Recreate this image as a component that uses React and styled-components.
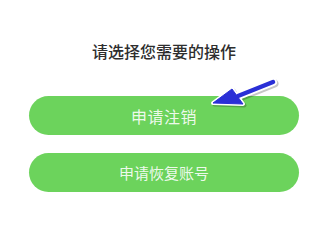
import React from "react";
import styled, { createGlobalStyle } from "styled-components";

const GlobalStyle = createGlobalStyle`
  html, body {
    margin: 0;
    padding: 0;
    background: #ffffff;
  }
  body {
    font-family: "Noto Sans CJK SC", "Noto Sans", sans-serif;
  }
`;

const Page = styled.div`
  width: 319px;
  height: 207px;
  box-sizing: border-box;
  padding: 40px 20px 0 29px;
  display: flex;
  flex-direction: column;
  align-items: stretch;
  overflow: hidden;
`;

const Title = styled.div`
  text-align: center;
  font-size: 16px;
  line-height: 22px;
  font-weight: 500;
  color: #2e2e2e;
  margin-bottom: 34px;
`;

const ActionList = styled.div`
  display: flex;
  flex-direction: column;
  gap: 18px;
`;

const ActionButton = styled.button`
  position: relative;
  height: 39px;
  border: none;
  border-radius: 999px;
  background: #6cd35c;
  color: rgba(255, 255, 255, 0.9);
  font-family: inherit;
  font-size: ${(p) => (p.$small ? "15px" : "16px")};
  letter-spacing: ${(p) => (p.$small ? "0" : "0.5px")};
  cursor: pointer;
  padding: 0;
`;

const Pointer = styled.svg`
  position: absolute;
  left: 176px;
  top: -21px;
  width: 80px;
  height: 40px;
  overflow: visible;
  pointer-events: none;
`;

const SHAFT = { x1: 33, y1: 21, x2: 68, y2: 7 };
const HEAD = "8,28 27,14 38,29";

const ArrowMark = () => (
  <Pointer viewBox="0 0 80 40">
    <g opacity="0.22" transform="translate(1.5 1.5)">
      <line {...SHAFT} stroke="#000" strokeWidth="8" strokeLinecap="round" />
      <polygon points={HEAD} fill="#000" stroke="#000" strokeWidth="4" strokeLinejoin="round" />
    </g>
    <line {...SHAFT} stroke="#fff" strokeWidth="8" strokeLinecap="round" />
    <polygon points={HEAD} fill="#fff" stroke="#fff" strokeWidth="4" strokeLinejoin="round" />
    <line {...SHAFT} stroke="#2a2fd6" strokeWidth="4.5" strokeLinecap="round" />
    <polygon points={HEAD} fill="#2a2fd6" stroke="#2a2fd6" strokeWidth="1" strokeLinejoin="round" />
  </Pointer>
);

export default function App() {
  return (
    <>
      <GlobalStyle />
      <Page>
        <Title>请选择您需要的操作</Title>
        <ActionList>
          <ActionButton>
            申请注销
            <ArrowMark />
          </ActionButton>
          <ActionButton $small>申请恢复账号</ActionButton>
        </ActionList>
      </Page>
    </>
  );
}
